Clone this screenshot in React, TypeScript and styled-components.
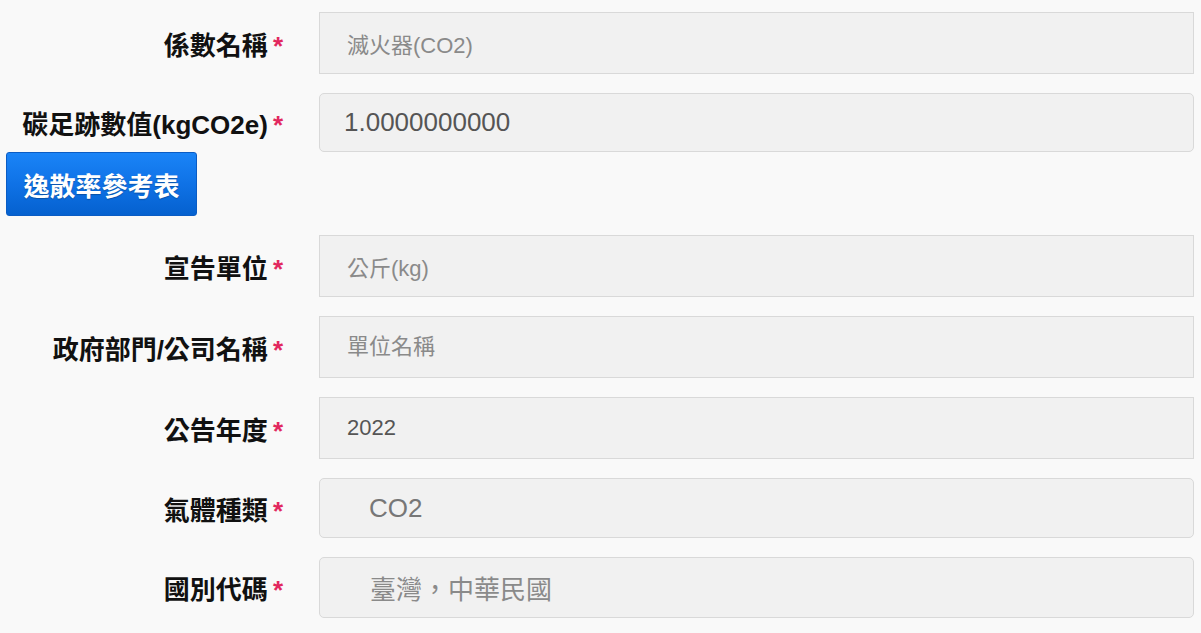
import React from 'react';
import styled, { createGlobalStyle } from 'styled-components';

const GlobalStyle = createGlobalStyle`
    html, body {
        margin: 0;
        padding: 0;
        background: #f9f9f9;
    }
    body {
        font-family: 'Liberation Sans', 'Noto Sans CJK TC', sans-serif;
    }
`;

const Form = styled.form`
    display: flex;
    flex-direction: column;
    gap: 19px;
    padding: 12px 7px 0 6px;
`;

const FieldRow = styled.div`
    display: flex;
    align-items: center;
    gap: 36px;
`;

const Label = styled.label`
    flex: 0 0 277px;
    text-align: right;
    font-size: 26px;
    font-weight: bold;
    color: #111;
    white-space: nowrap;
`;

const Required = styled.span`
    color: #e2285f;
    margin-left: 5px;
`;

const TextField = styled.input<{ $h: number; $size: number; $pad: number; $tone: string; $round?: boolean }>`
    flex: 1;
    min-width: 0;
    box-sizing: border-box;
    height: ${(p) => p.$h}px;
    padding: 0 12px 0 ${(p) => p.$pad}px;
    border: 1px solid #d9d9d9;
    border-radius: ${(p) => (p.$round ? '5px' : '0')};
    background: #f1f1f1;
    font-family: 'Liberation Sans', 'Noto Sans CJK TC', sans-serif;
    font-size: ${(p) => p.$size}px;
    color: ${(p) => p.$tone};
    outline: none;

    &::placeholder {
        color: #8a8a8a;
        opacity: 1;
    }
`;

const Group = styled.div`
    display: flex;
    flex-direction: column;
`;

const RefButton = styled.button`
    align-self: flex-start;
    width: 191px;
    height: 64px;
    padding: 0;
    border: 1px solid #0a5cc4;
    border-radius: 3px;
    background: linear-gradient(to bottom, #1a84f7 0%, #0f72e6 50%, #0561cf 100%);
    color: #fff;
    font-family: 'Liberation Sans', 'Noto Sans CJK TC', sans-serif;
    font-size: 26px;
    font-weight: bold;
    text-shadow: 0 1px 1px rgba(0, 0, 0, 0.25);
    cursor: pointer;
`;

type FieldDef = {
    label: string;
    value?: string;
    placeholder?: string;
    h: number;
    size: number;
    pad: number;
    tone: string;
    round?: boolean;
};

const fields: FieldDef[] = [
    { label: '宣告單位', value: '公斤(kg)', h: 62, size: 22, pad: 27, tone: '#8a8a8a' },
    { label: '政府部門/公司名稱', placeholder: '單位名稱', h: 62, size: 22, pad: 27, tone: '#8a8a8a' },
    { label: '公告年度', value: '2022', h: 62, size: 22, pad: 27, tone: '#555' },
    { label: '氣體種類', value: 'CO2', h: 60, size: 26, pad: 49, tone: '#777', round: true },
    { label: '國別代碼', value: '臺灣，中華民國', h: 61, size: 26, pad: 50, tone: '#8a8a8a', round: true },
];

const Field: React.FC<FieldDef> = ({ label, value, placeholder, ...rest }) => (
    <FieldRow>
        <Label>
            {label}
            <Required>*</Required>
        </Label>
        <TextField
            readOnly
            value={value ?? ''}
            placeholder={placeholder}
            $h={rest.h}
            $size={rest.size}
            $pad={rest.pad}
            $tone={rest.tone}
            $round={rest.round}
        />
    </FieldRow>
);

const App: React.FC = () => {
    return (
        <>
            <GlobalStyle />
            <Form onSubmit={(e) => e.preventDefault()}>
                <Field label="係數名稱" value="滅火器(CO2)" h={62} size={22} pad={27} tone="#8a8a8a" />
                <Group>
                    <Field label="碳足跡數值(kgCO2e)" value="1.0000000000" h={59} size={26} pad={24} tone="#555" round />
                    <RefButton type="button">逸散率參考表</RefButton>
                </Group>
                {fields.map((f) => (
                    <Field key={f.label} {...f} />
                ))}
            </Form>
        </>
    );
};

export default App;
